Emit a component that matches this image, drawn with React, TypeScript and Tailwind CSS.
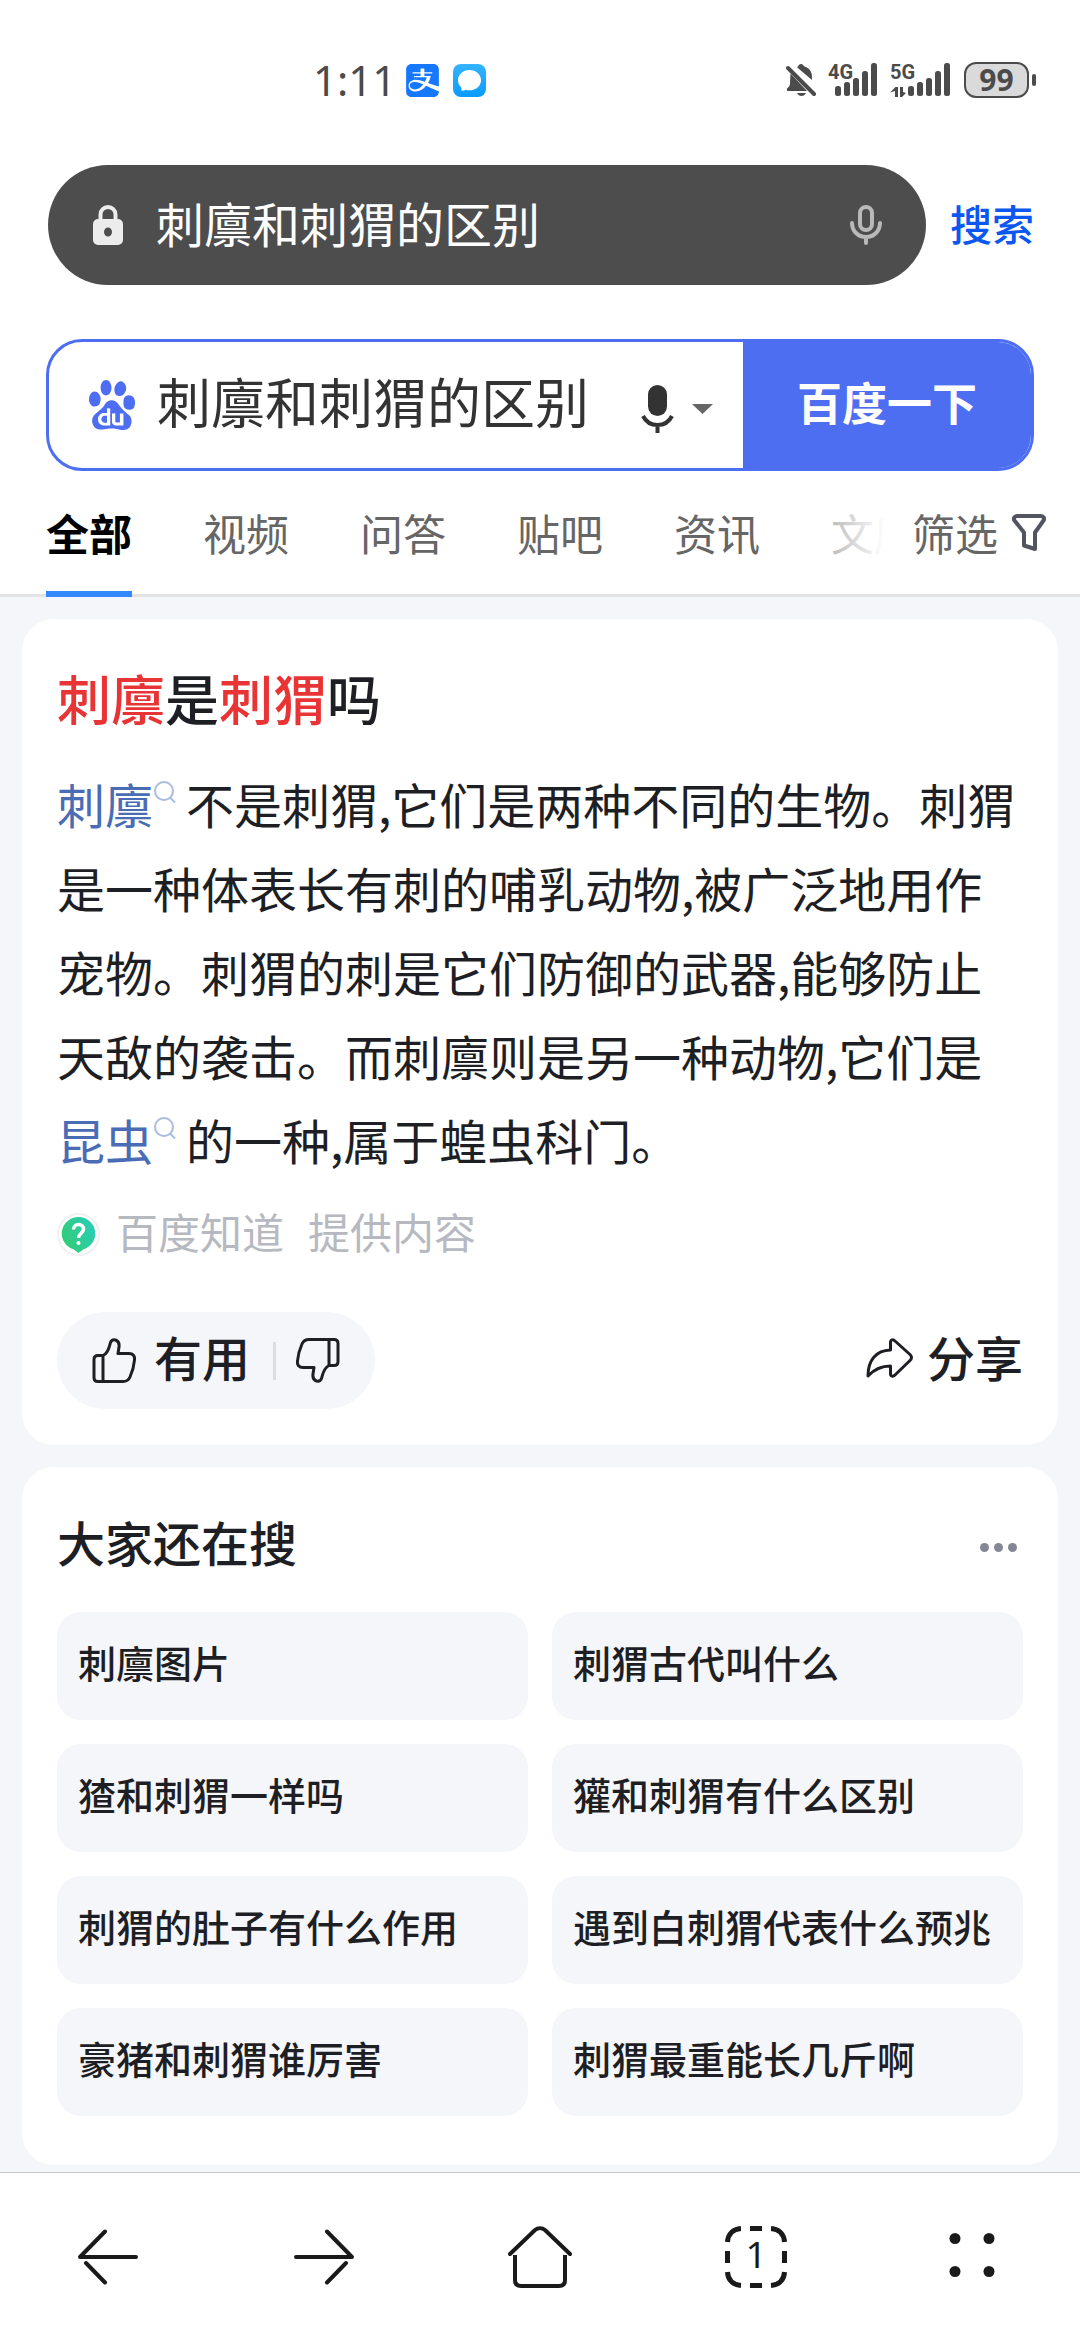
import React, { useState } from 'react';
import { SiAlipay, SiBaidu } from 'react-icons/si';

const QUERY = '刺廪和刺猬的区别';

const TABS = ['全部', '视频', '问答', '贴吧', '资讯', '文库'];

const RELATED = [
  '刺廪图片',
  '刺猬古代叫什么',
  '猹和刺猬一样吗',
  '獾和刺猬有什么区别',
  '刺猬的肚子有什么作用',
  '遇到白刺猬代表什么预兆',
  '豪猪和刺猬谁厉害',
  '刺猬最重能长几斤啊',
];

const BAR_TOPS = [24, 20, 16, 9, 1];

function Signal({ label, data }: { label: string; data?: boolean }) {
  const start = data ? 18 : 7;
  const width = data ? 63 : 50;
  return (
    <svg width={width} height="36" viewBox={`0 0 ${width} 36`} fill="#4b4b4b">
      <text x="0" y="17" fontSize="20" fontWeight="700" fontFamily="Roboto, sans-serif">{label}</text>
      {/* up/down arrows next to the network that carries data */}
      {data && <path d="M5 35V29L0 30.500 5.500 25H8V35zM10 25h3v5l3 1-4 4h-2z" />}
      {BAR_TOPS.map((top, i) => (
        <rect key={top} x={start + i * 9} y={top} width="6" height={34 - top} rx="2.500" />
      ))}
    </svg>
  );
}

function StatusBar() {
  return (
    <div className="flex h-9 items-center justify-between pl-[313px] pr-11 font-['Noto_Sans',sans-serif] text-[#4b4b4b]">
      <div className="flex items-center">
        <span className="w-[93px] text-[42px] leading-9">1:11</span>
        <SiAlipay className="size-[33px] text-[#1677ff]" />
        <svg className="ml-[14px]" width="33" height="33" viewBox="0 0 33 33">
          <defs>
            <linearGradient id="chat" x1="0" y1="0" x2="0" y2="1">
              <stop offset="0" stopColor="#35b4ff" />
              <stop offset="1" stopColor="#0a9bff" />
            </linearGradient>
          </defs>
          <rect width="33" height="33" rx="8" fill="url(#chat)" />
          <path d="M16.500 6C10 6 5 10.500 5 16.200c0 2.800 1.200 5.200 3 7 .6.700.5 2 .2 3.300 1.800.4 3.200-.2 4.300-.8 1.200.4 2.600.6 4 .6C23 26.300 28 22 28 16.200S23 6 16.500 6z" fill="#fff" />
        </svg>
      </div>
      <div className="flex items-center">
        <svg className="mr-3" width="30" height="36" viewBox="0 0 30 36" fill="#4b4b4b">
          <path d="M15 2c1.500 0 2.500 1 3 2.300 5 1.500 8 5 8 10.700v3L11 5.200c.4-.2.900-.6 1.200-.9C12.500 3 13.500 2 15 2zM4.500 11.500L21 29H1v-2.500C3 25 4 23.500 4 21zM11 31h9c-1 2-2.500 3-4.500 3S12 33 11 31z" />
          <path d="M2 6l26 26" stroke="#4b4b4b" strokeWidth="4" strokeLinecap="round" />
          <path d="M7 5.500L29 27" stroke="#fff" strokeWidth="2.500" />
        </svg>
        <Signal label="4G" />
        <span className="w-3" />
        <Signal label="5G" data />
        <span className="ml-[11px] flex h-9 w-[65px] items-center justify-center rounded-xl border-2 border-[#4b4b4b] bg-[#dadada] font-['Open_Sans',sans-serif] text-[30px] font-bold leading-8">
          99
        </span>
        <span className="ml-[3px] h-3 w-1 rounded bg-[#4b4b4b]" />
      </div>
    </div>
  );
}

function AddressBar() {
  return (
    <form className="mt-[67px] flex items-center pl-12 pr-[46px]" onSubmit={(e) => e.preventDefault()}>
      <div className="flex h-[120px] min-w-0 flex-1 items-center rounded-full bg-[#4d4d4d] pl-[45px] pr-[44px]">
        <svg className="shrink-0" width="30" height="40" viewBox="0 0 30 40">
          <path d="M7.500 16V9.500a7.500 7.500 0 0 1 15 0V16" fill="none" stroke="#ececec" strokeWidth="4" />
          <path fillRule="evenodd" d="M5 14h20a5 5 0 0 1 5 5v16a5 5 0 0 1-5 5H5a5 5 0 0 1-5-5V19a5 5 0 0 1 5-5zm10 8.500a4 4.500 0 1 0 0 9 4 4.500 0 1 0 0-9z" fill="#ececec" />
        </svg>
        <input
          aria-label="网址"
          defaultValue={QUERY}
          className="ml-[33px] h-[72px] min-w-0 flex-1 bg-transparent pb-[7px] text-[48px] text-white outline-none"
        />
        <button type="button" aria-label="语音输入">
          <svg width="32" height="40" viewBox="0 0 32 40" fill="none" stroke="#b9b9b9" strokeWidth="4" strokeLinecap="round">
            <rect x="10" y="2" width="12" height="23" rx="6" />
            <path d="M2 18c0 8 6 14 14 14s14-6 14-14M16 33v5" />
          </svg>
        </button>
      </div>
      <button type="submit" className="ml-6 pb-[6px] text-[42px] font-medium text-[#0b57f0]">搜索</button>
    </form>
  );
}

function SearchBox() {
  return (
    <form
      className="mx-[46px] mt-[54px] flex h-[132px] overflow-hidden rounded-[36px] border-[3px] border-[#4e6ef2]"
      onSubmit={(e) => e.preventDefault()}
    >
      <div className="flex min-w-0 flex-1 items-center pl-[38px] pr-[30px]">
        <SiBaidu className="size-[50px] shrink-0 text-[#4e6ef2]" />
        <input
          aria-label="搜索词"
          defaultValue={QUERY}
          className="ml-5 h-[88px] min-w-0 flex-1 bg-transparent pb-[9px] text-[54px] text-[#333] outline-none"
        />
        <button type="button" aria-label="语音搜索" className="flex items-center gap-[18px] pt-[7px]">
          <svg width="33" height="48" viewBox="0 0 33 48">
            <rect x="7" y="0" width="19" height="31" rx="9.500" fill="#333" />
            <path d="M2 31c3 6 8 9 14.500 9S28 37 31 31M16.500 40v8" fill="none" stroke="#333" strokeWidth="4" />
          </svg>
          <svg width="21" height="10" viewBox="0 0 21 10">
            <path d="M0 0h21L10.500 10z" fill="#666" />
          </svg>
        </button>
      </div>
      <button type="submit" className="w-[288px] shrink-0 bg-[#4e6ef2] pb-[6px] text-[45px] font-bold text-white">
        百度一下
      </button>
    </form>
  );
}

function TabBar() {
  const [active, setActive] = useState('全部');

  return (
    <nav className="flex h-[126px] pl-[46px] pr-[34px] text-[43px] leading-[64px] text-[#666] shadow-[inset_0_-3px_0_#e3e3e3]">
      <div className="relative flex min-w-0 flex-1 gap-[71px] overflow-hidden">
        {TABS.map((tab) => (
          <a
            key={tab}
            href="#"
            onClick={() => setActive(tab)}
            className={
              tab === active
                ? 'flex shrink-0 items-center border-b-[6px] border-[#3388ff] pt-px font-bold text-black'
                : 'flex shrink-0 items-center pb-[5px]'
            }
          >
            {tab}
          </a>
        ))}
        <div className="absolute bottom-1 right-0 top-0 w-[86px] bg-gradient-to-r from-white/30 to-white" />
      </div>
      <button type="button" className="ml-[27px] flex shrink-0 items-center gap-[14px] pb-[5px]">
        筛选
        <svg width="34" height="38" viewBox="0 0 34 38" fill="none" stroke="#525460" strokeWidth="4" strokeLinejoin="round">
          <path d="M5 3h24c2.500 0 4 2.500 2.500 4.500L23 19.500V36l-11-3.500V19.500L2.500 7.500C1 5.500 2.500 3 5 3z" />
        </svg>
      </button>
    </nav>
  );
}

function Term({ children }: { children: React.ReactNode }) {
  return (
    <a href="#" className="whitespace-nowrap text-[#4a6cb5]">
      {children}
      <svg className="ml-px mr-[10px] inline-block align-[21px]" width="22" height="22" viewBox="0 0 22 22" fill="none" stroke="#a9bbdf" strokeWidth="2">
        <circle cx="10" cy="10" r="9" />
        <path d="M16 16.500l5 5" />
      </svg>
    </a>
  );
}

function ThumbIcon({ className }: { className?: string }) {
  return (
    <svg className={className} width="44" height="45" viewBox="0 0 44 45" fill="none" stroke="#1e1f24" strokeWidth="3" strokeLinejoin="round">
      <path d="M11 17.500c6-3 6-9 7.500-13 1-2.500 3-3 5-2.500 3 1 4 3.500 3.500 7l-1 6.500h11c4 0 6 2.500 5.500 6.500-.5 6-2 11.500-4.500 17-1.500 3.500-3.500 4.500-7 4.500H6c-2.500 0-4-1.500-4-4V21.500c0-2.500 1.500-4 4-4zM11 17.500v26" />
    </svg>
  );
}

function AnswerCard() {
  return (
    <section className="rounded-[32px] bg-white px-[35px] pb-9 pt-[43px]">
      <h2 className="text-[54px] font-medium leading-[72px]">
        <em className="not-italic text-[#e83434]">刺廪</em>是<em className="not-italic text-[#e83434]">刺猬</em>吗
      </h2>
      <p className="mt-[27px] text-[48px] leading-[84px]">
        <Term>刺廪</Term>不是刺猬,它们是两种不同的生物。刺猬是一种体表长有刺的哺乳动物,被广泛地用作宠物。刺猬的刺是它们防御的武器,能够防止天敌的袭击。而刺廪则是另一种动物,它们是<Term>昆虫</Term>的一种,属于蝗虫科门。
      </p>
      <div className="mt-[26px] flex h-12 items-center text-[42px] leading-[48px] text-[#b7b9c1]">
        <svg className="mr-4 mt-[6px]" width="43" height="43" viewBox="0 0 43 43">
          <defs>
            <linearGradient id="zhidao" x1="0" y1="1" x2="1" y2="0.500">
              <stop offset="0" stopColor="#35cc6c" />
              <stop offset="1" stopColor="#2acdb0" />
            </linearGradient>
          </defs>
          <circle cx="21.500" cy="21.500" r="20.500" fill="#fff" stroke="#f0f0f2" strokeWidth="2" />
          <path d="M21.500 4a16.500 16.500 0 0 1 5 32.300L21.500 40l-5-3.700A16.500 16.500 0 0 1 21.500 4z" fill="url(#zhidao)" />
          <path d="M16.500 16.500c0-3 2-5 5-5s5 2 5 4.500c0 4-5 4.500-5 9" fill="none" stroke="#fff" strokeWidth="3.500" />
          <circle cx="21.500" cy="30" r="2" fill="#fff" />
        </svg>
        <span>百度知道</span>
        <span className="ml-6">提供内容</span>
      </div>
      <div className="mt-[57px] flex items-center justify-between text-[48px] font-medium leading-[64px]">
        <div className="flex h-[97px] items-center rounded-full bg-[#f5f6fa] px-[35px]">
          <button type="button" className="flex items-center gap-[18px] pb-[9px]">
            <ThumbIcon className="mt-2" />
            有用
          </button>
          <span className="ml-[23px] mr-5 h-[38px] w-[3px] bg-[#dcdde1]" />
          <button type="button" aria-label="没用">
            <ThumbIcon className="rotate-180" />
          </button>
        </div>
        <button type="button" className="flex items-center gap-[14px] pb-[9px]">
          <svg className="mt-1" width="47" height="40" viewBox="0 0 47 40" fill="none" stroke="#1e1f24" strokeWidth="3" strokeLinejoin="round">
            <path d="M2 38C2 22 10 12.500 24.500 12V4.500c0-3 2.500-3.500 4.500-1.500l15 13.500c2 2 2 4 0 6L29 37c-2 2-4.500 1.500-4.500-1.500V28C14.500 28 8 31.500 2 38z" />
          </svg>
          分享
        </button>
      </div>
    </section>
  );
}

function RelatedCard() {
  return (
    <section className="mt-[22px] rounded-[32px] bg-white px-[35px] pb-[49px] pt-[42px]">
      <div className="flex items-center justify-between">
        <h2 className="text-[48px] font-medium leading-[64px]">大家还在搜</h2>
        <button type="button" aria-label="更多" className="flex gap-[5px] pr-[6px] pt-3">
          <span className="size-[9px] rounded-full bg-[#858894]" />
          <span className="size-[9px] rounded-full bg-[#858894]" />
          <span className="size-[9px] rounded-full bg-[#858894]" />
        </button>
      </div>
      <div className="mt-[39px] grid grid-cols-2 gap-6">
        {RELATED.map((text) => (
          <a
            key={text}
            href="#"
            className="flex h-[108px] items-center whitespace-nowrap rounded-3xl bg-[#f5f6fa] px-[21px] pb-[9px] text-[38px] font-medium"
          >
            {text}
          </a>
        ))}
      </div>
    </section>
  );
}

function BottomNav() {
  return (
    <nav className="mt-[7px] grid h-[168px] grid-cols-5 items-center justify-items-center border-t border-[#c8c9cc] bg-white">
      <button type="button" aria-label="后退">
        <svg width="60" height="56" viewBox="0 0 60 56" fill="none" stroke="#1a1a1a" strokeWidth="4" strokeLinecap="round">
          <path d="M58 28H2L27 2.500" strokeLinejoin="round" />
          <path d="M8 34l19 19.500" />
        </svg>
      </button>
      <button type="button" aria-label="前进">
        <svg width="60" height="56" viewBox="0 0 60 56" fill="none" stroke="#1a1a1a" strokeWidth="4" strokeLinecap="round">
          <path d="M2 28h56L33 2.500" strokeLinejoin="round" />
          <path d="M52 34L33 53.500" />
        </svg>
      </button>
      <button type="button" aria-label="主页">
        <svg width="64" height="62" viewBox="0 0 64 62" fill="none" stroke="#1a1a1a" strokeWidth="4">
          <path d="M2 28L27 4c3-2.500 7-2.500 10 0l25 24" strokeLinecap="round" />
          <path d="M7 29v25c0 4 2 6 6 6h38c4 0 6-2 6-6V29" />
        </svg>
      </button>
      <button type="button" aria-label="标签页">
        <svg width="62" height="62" viewBox="0 0 62 62" fill="none" stroke="#1a1a1a" strokeWidth="5">
          <path d="M16 2.500C8 3 3 8 2.500 16M46 2.500C54 3 59 8 59.500 16M16 59.500C8 59 3 54 2.500 46M46 59.500C54 59 59 54 59.500 46M25 2.500h12M25 59.500h12M2.500 25v12M59.500 25v12" />
          <text x="31" y="42" textAnchor="middle" fontSize="37" fontFamily="'Noto Sans', sans-serif" fill="#1a1a1a" stroke="none">1</text>
        </svg>
      </button>
      <button type="button" aria-label="菜单" className="pb-1">
        <svg width="46" height="44" viewBox="0 0 46 44" fill="#1a1a1a">
          <circle cx="6" cy="5.500" r="5.500" />
          <circle cx="40" cy="5.500" r="5.500" />
          <circle cx="6" cy="38.500" r="5.500" />
          <circle cx="40" cy="38.500" r="5.500" />
        </svg>
      </button>
    </nav>
  );
}

export default function App() {
  return (
    <div className="flex min-h-screen flex-col bg-[#f5f6fa] font-['Noto_Sans_CJK_SC',sans-serif] text-[#1e1f24]">
      <header className="bg-white pt-[62px]">
        <StatusBar />
        <AddressBar />
        <SearchBox />
        <TabBar />
      </header>
      <main className="flex-1 px-[22px] pt-[22px]">
        <AnswerCard />
        <RelatedCard />
      </main>
      <BottomNav />
    </div>
  );
}
